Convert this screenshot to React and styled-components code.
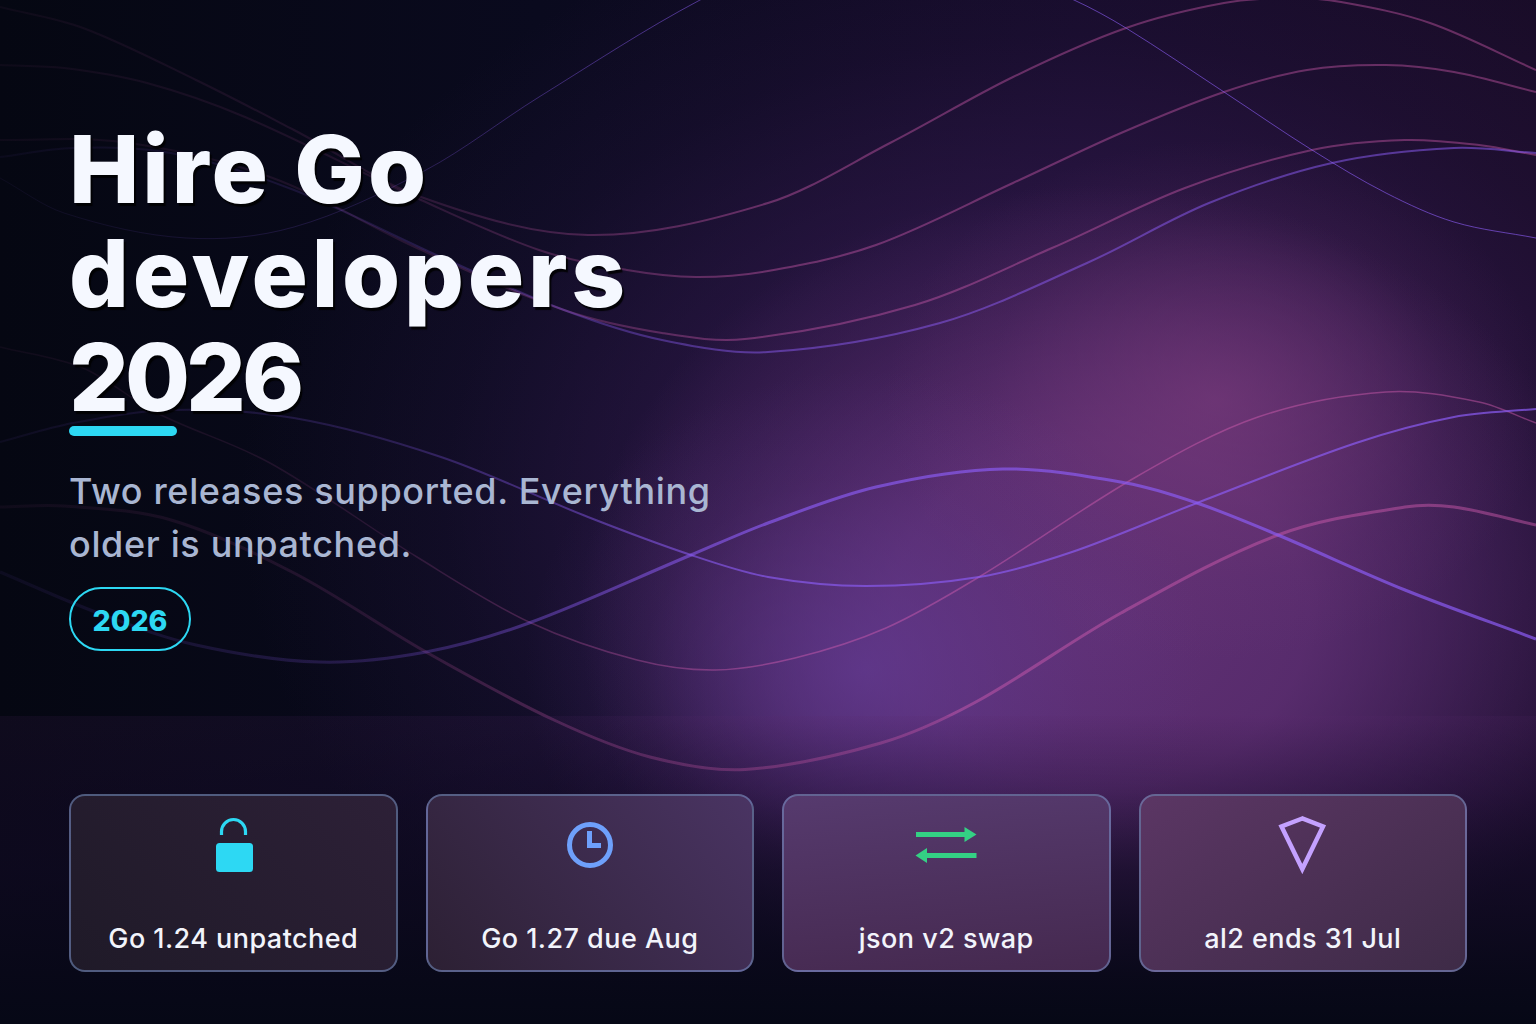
import React from 'react'
import styled, { createGlobalStyle } from 'styled-components'

const GlobalStyle = createGlobalStyle`
  html, body {
    margin: 0;
    background: #060814;
  }
  body {
    font-family: Inter, "Open Sans", "Liberation Sans", sans-serif;
  }
`

const Page = styled.div`
  position: relative;
  width: 1536px;
  height: 1024px;
  overflow: hidden;
  display: flex;
  flex-direction: column;
  background:
    radial-gradient(ellipse 340px 300px at 865px 670px, rgba(100, 60, 150, 0.7), rgba(100, 60, 150, 0.45) 30%, rgba(100, 60, 150, 0.14) 65%, rgba(100, 60, 150, 0) 100%),
    radial-gradient(ellipse 330px 260px at 1216px 400px, rgba(124, 60, 125, 0.66), rgba(124, 60, 125, 0.4) 35%, rgba(124, 60, 125, 0.12) 70%, rgba(124, 60, 125, 0) 100%),
    radial-gradient(ellipse 520px 430px at 1100px 615px, rgba(100, 50, 120, 0.92), rgba(100, 50, 120, 0.78) 40%, rgba(100, 50, 120, 0.3) 75%, rgba(100, 50, 120, 0) 100%),
    radial-gradient(ellipse 820px 620px at 1060px 500px, rgba(60, 30, 90, 0.72), rgba(60, 30, 90, 0.5) 45%, rgba(60, 30, 90, 0.16) 75%, rgba(60, 30, 90, 0) 100%),
    linear-gradient(90deg, #050712 0%, #0a0a1e 35%, #140b28 70%, #190c28 100%);
`

const Waves = styled.svg`
  position: absolute;
  inset: 0;
  width: 1536px;
  height: 1024px;
`

const Hero = styled.section`
  position: relative;
  flex: 1;
  padding: 117px 69px 0;
`

const Title = styled.h1`
  margin: 0;
  font-size: 94px;
  line-height: 104px;
  font-weight: 800;
  color: #f5f8ff;
  text-shadow: 2px 3px 1px rgba(0, 0, 0, 0.85);
`

const TitleLine = styled.span`
  display: block;
  letter-spacing: ${props => props.$spacing}px;
`

const Underline = styled.div`
  width: 108px;
  height: 10px;
  margin-top: -3px;
  border-radius: 5px;
  background: #2dd8f3;
`

const Subtitle = styled.p`
  width: 680px;
  margin: 29px 0 0;
  font-size: 36px;
  line-height: 53px;
  font-weight: 500;
  letter-spacing: 0.65px;
  color: #a9b6d2;
`

const Pill = styled.div`
  box-sizing: border-box;
  width: 122px;
  height: 64px;
  margin-top: 16px;
  padding-top: 3px;
  display: flex;
  align-items: center;
  justify-content: center;
  border: 2px solid #2dd8f3;
  border-radius: 32px;
  font-size: 28.5px;
  font-weight: 800;
  color: #2dd8f3;
`

const Footer = styled.footer`
  position: relative;
  box-sizing: border-box;
  height: 308px;
  padding: 78px 69px 52px;
  display: grid;
  grid-template-columns: repeat(4, 1fr);
  gap: 28px;
  background: linear-gradient(180deg, rgba(90, 40, 110, 0.12) 0%, rgba(30, 14, 50, 0.35) 25%, rgba(16, 10, 34, 0.7) 50%, rgba(8, 8, 24, 0.95) 85%, #060816 100%);
`

const Card = styled.div`
  box-sizing: border-box;
  height: 178px;
  padding: 19px 12px 12px;
  display: flex;
  flex-direction: column;
  align-items: center;
  justify-content: space-between;
  border: 2px solid rgba(125, 155, 210, 0.5);
  border-radius: 16px;
  background: linear-gradient(${props => props.$angle}deg, ${props => props.$from}, ${props => props.$to});
`

const Icon = styled.svg`
  width: 61px;
  height: 62px;
  overflow: visible;
  flex: none;
`

const CardLabel = styled.div`
  font-size: 27px;
  line-height: 38px;
  font-weight: 500;
  letter-spacing: 0.45px;
  color: #f2f4fb;
`

const WAVES = [
  { tone: 'pink', width: 2, fade: 0.9, points: [[0, 7], [83, 28], [196, 80], [294, 130], [421, 197], [588, 235], [768, 203], [890, 143], [1013, 77], [1126, 28], [1224, 3], [1290, -2], [1341, 2], [1430, 23], [1536, 70]] },
  { tone: 'pink', width: 2, fade: 0.9, points: [[0, 65], [64, 68], [147, 83], [245, 117], [421, 200], [539, 250], [627, 270], [696, 277], [768, 271], [876, 245], [1013, 183], [1121, 133], [1224, 92], [1307, 70], [1386, 65], [1454, 72], [1536, 92]] },
  { tone: 'pink', width: 2, fade: 0.9, points: [[0, 140], [122, 142], [270, 177], [417, 248], [564, 310], [662, 333], [745, 339], [915, 305], [1052, 248], [1185, 188], [1312, 150], [1405, 140], [1479, 145], [1536, 155]] },
  { tone: 'violet', width: 2, fade: 0.75, points: [[0, 157], [73, 148], [171, 153], [294, 190], [441, 257], [564, 310], [662, 340], [768, 352], [940, 323], [1087, 263], [1209, 203], [1332, 163], [1454, 148], [1536, 153]] },
  { tone: 'violet', width: 1, fade: 0.9, points: [[0, 178], [64, 213], [186, 238], [294, 227], [426, 170], [539, 97], [700, 0], [780, -30], [900, -45], [1000, -30], [1074, 0], [1126, 28], [1224, 92], [1312, 150], [1386, 193], [1454, 222], [1536, 238]] },
  { tone: 'pink', width: 1.5, fade: 1, points: [[0, 347], [83, 368], [157, 413], [270, 463], [417, 557], [529, 622], [637, 660], [715, 670], [795, 658], [886, 628], [979, 577], [1136, 477], [1258, 417], [1386, 392], [1479, 402], [1536, 423]] },
  { tone: 'violet', width: 2, fade: 1, points: [[0, 442], [73, 423], [171, 410], [294, 418], [441, 457], [588, 517], [691, 555], [768, 577], [866, 586], [979, 577], [1072, 552], [1197, 503], [1356, 443], [1454, 417], [1536, 409]] },
  { tone: 'pink', width: 3, fade: 1, points: [[0, 507], [64, 506], [171, 520], [294, 573], [426, 652], [554, 720], [650, 757], [745, 769.5], [881, 743], [974, 703], [1121, 613], [1278, 535], [1405, 507], [1454, 507], [1536, 525]] },
  { tone: 'violet', width: 3, fade: 1, points: [[0, 572], [98, 613], [196, 645], [319, 662], [426, 652], [529, 623], [691, 555], [768, 523], [876, 487], [1003, 469], [1126, 483], [1197, 503], [1278, 535], [1405, 590], [1536, 639]] },
]

// hermite through the read-off points, x always grows so slopes are safe
const toPath = points => {
  const slope = i => {
    const a = points[Math.max(i - 1, 0)]
    const b = points[Math.min(i + 1, points.length - 1)]
    return (b[1] - a[1]) / (b[0] - a[0])
  }
  let d = `M${points[0][0]} ${points[0][1]}`
  for (let i = 0; i < points.length - 1; i++) {
    const p1 = points[i]
    const p2 = points[i + 1]
    const dx = (p2[0] - p1[0]) / 3
    d += ` C${p1[0] + dx} ${p1[1] + slope(i) * dx} ${p2[0] - dx} ${p2[1] - slope(i + 1) * dx} ${p2[0]} ${p2[1]}`
  }
  return d
}

const WaveBackdrop = () => (
  <Waves viewBox="0 0 1536 1024">
    <defs>
      <linearGradient id="pink" gradientUnits="userSpaceOnUse" x1="0" y1="0" x2="1536" y2="0">
        <stop offset="0" stopColor="#d65db1" stopOpacity="0.05" />
        <stop offset="0.25" stopColor="#d65db1" stopOpacity="0.14" />
        <stop offset="0.5" stopColor="#d65db1" stopOpacity="0.45" />
        <stop offset="1" stopColor="#d65db1" stopOpacity="0.45" />
      </linearGradient>
      <linearGradient id="violet" gradientUnits="userSpaceOnUse" x1="0" y1="0" x2="1536" y2="0">
        <stop offset="0" stopColor="#8b5cf6" stopOpacity="0.06" />
        <stop offset="0.25" stopColor="#8b5cf6" stopOpacity="0.22" />
        <stop offset="0.5" stopColor="#8b5cf6" stopOpacity="0.65" />
        <stop offset="1" stopColor="#8b5cf6" stopOpacity="0.7" />
      </linearGradient>
    </defs>
    {WAVES.map((wave, i) => (
      <path key={i} d={toPath(wave.points)} fill="none" stroke={`url(#${wave.tone})`} strokeWidth={wave.width} opacity={wave.fade} />
    ))}
  </Waves>
)

const LockIcon = () => (
  <Icon viewBox="-1 0 61 62">
    <path d="M17.5 20v-3.5a12 12 0 0 1 24 0V20" fill="none" stroke="#2dd8f3" strokeWidth="3.2" />
    <rect x="12" y="28" width="37" height="29" rx="3.5" fill="#2dd8f3" />
  </Icon>
)

const ClockIcon = () => (
  <Icon viewBox="-1 0 61 62">
    <circle cx="30" cy="30" r="20.5" fill="none" stroke="#6ea0fb" strokeWidth="5" />
    <path d="M29.5 16v14.5H41" fill="none" stroke="#6ea0fb" strokeWidth="5" />
  </Icon>
)

const SwapIcon = () => (
  <Icon viewBox="0 0 61 62">
    <path d="M0 19.5h49" stroke="#34d184" strokeWidth="5" />
    <path d="M48.5 12l12 7.5-12 7.5z" fill="#34d184" />
    <path d="M11 40.5h49.5" stroke="#34d184" strokeWidth="5" />
    <path d="M11 33L-.5 40.5 11 48z" fill="#34d184" />
  </Icon>
)

const KiteIcon = () => (
  <Icon viewBox="0 0 61 62">
    <path d="M30.3 3.5L9.5 11.5 30.3 54 51 11.5z" fill="none" stroke="#c4a1ff" strokeWidth="4.5" strokeMiterlimit="10" />
  </Icon>
)

const CARDS = [
  { label: 'Go 1.24 unpatched', icon: <LockIcon />, angle: 45, from: '#1f1a28', to: '#2d2037' },
  { label: 'Go 1.27 due Aug', icon: <ClockIcon />, angle: 50, from: '#2c2033', to: '#4a3463' },
  { label: 'json v2 swap', icon: <SwapIcon />, angle: 175, from: '#563a6e', to: '#45294f' },
  { label: 'al2 ends 31 Jul', icon: <KiteIcon />, angle: 150, from: '#5b3664', to: '#3e2b47' },
]

export default function App() {
  return (
    <Page>
      <GlobalStyle />
      <WaveBackdrop />
      <Hero>
        <Title>
          <TitleLine $spacing={2.9}>Hire Go</TitleLine>
          <TitleLine $spacing={3.8}>developers</TitleLine>
          <TitleLine $spacing={-4}>2026</TitleLine>
        </Title>
        <Underline />
        <Subtitle>Two releases supported. Everything older is unpatched.</Subtitle>
        <Pill>2026</Pill>
      </Hero>
      <Footer>
        {CARDS.map(card => (
          <Card key={card.label} $angle={card.angle} $from={card.from} $to={card.to}>
            {card.icon}
            <CardLabel>{card.label}</CardLabel>
          </Card>
        ))}
      </Footer>
    </Page>
  )
}
